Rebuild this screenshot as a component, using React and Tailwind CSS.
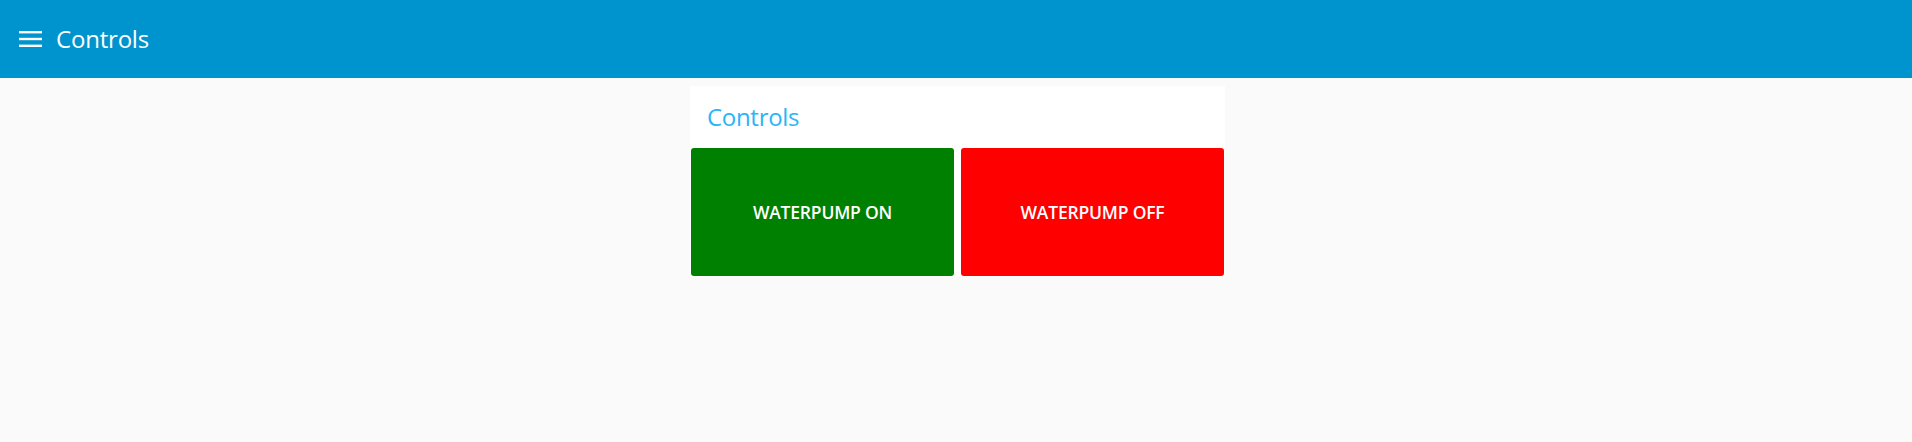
export default function App() {
  return (
    <div className="h-[442px] overflow-hidden bg-[#fafafa] font-['Open_Sans',sans-serif]">
      <header className="h-[78px] bg-[#0094ce] flex items-center pl-[19px] text-white">
        <svg width="23" height="16" viewBox="0 0 23 16" className="shrink-0">
          <rect x="0" y="0" width="23" height="2.4" fill="white" />
          <rect x="0" y="6.8" width="23" height="2.4" fill="white" />
          <rect x="0" y="13.6" width="23" height="2.4" fill="white" />
        </svg>
        <h1 className="ml-[14px] text-[24px] leading-none tracking-[-0.2px]">Controls</h1>
      </header>
      <main className="flex justify-center pt-[8px]">
        <section className="ml-[3px] w-[535px] bg-white px-[1px] pb-[1px]">
          <h2 className="h-[62px] flex items-center pl-[16px] pb-[1px] text-[24px] text-[#2bb5f5] tracking-[-0.3px]">
            Controls
          </h2>
          <div className="grid grid-cols-2 gap-[7px]">
            <button className="h-[128px] bg-[#008000] text-white rounded-[3px] text-[17.5px] font-semibold tracking-[-0.2px]">
              WATERPUMP ON
            </button>
            <button className="h-[128px] bg-[#ff0000] text-white rounded-[3px] text-[17.5px] font-semibold tracking-[-0.2px]">
              WATERPUMP OFF
            </button>
          </div>
        </section>
      </main>
    </div>
  );
}
